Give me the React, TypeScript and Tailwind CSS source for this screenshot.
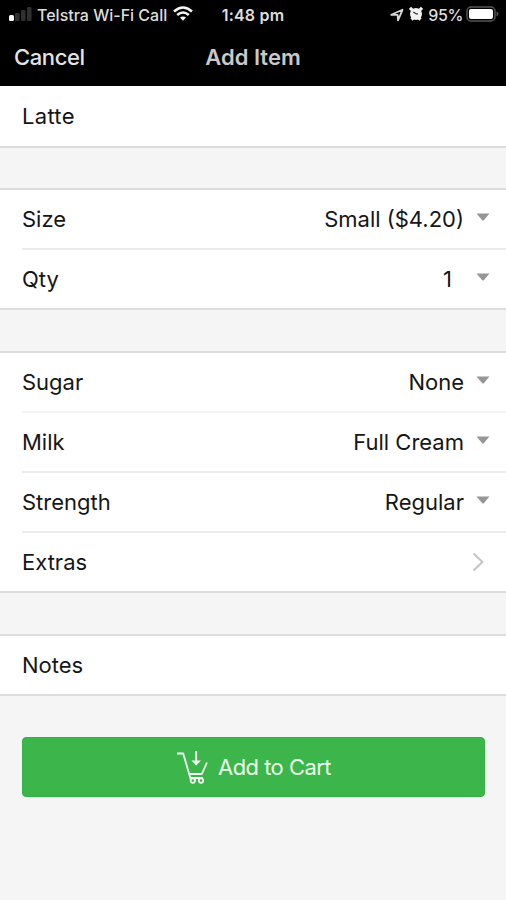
import React from 'react';

interface RowProps {
  label: string;
  value?: string;
  valueClass?: string;
  className?: string;
  kind?: 'select' | 'link' | 'plain';
}

const CaretDown = () => (
  <svg width="14" height="8" viewBox="0 0 14 8" className="shrink-0">
    <path d="M0.5 0.5h13L7.8 7.2q-.8.7-1.6 0z" fill="#969696" />
  </svg>
);

const ChevronRight = () => (
  <svg width="12" height="20" viewBox="0 0 12 20" fill="none" stroke="#c4c4c4" strokeWidth="2">
    <path d="M1.5 1.5L10.5 10l-9 8.5" />
  </svg>
);

const Row: React.FC<RowProps> = ({ label, value, valueClass = '', className = 'h-[58px]', kind = 'plain' }) => (
  <div className={`ml-[22px] flex items-center justify-between ${className}`}>
    <span>{label}</span>
    {kind === 'select' && (
      <div className="flex items-center pr-4">
        <span className={`mr-3 ${valueClass}`}>{value}</span>
        <span className="-mt-1">
          <CaretDown />
        </span>
      </div>
    )}
    {kind === 'link' && (
      <div className="pr-[22px]">
        <ChevronRight />
      </div>
    )}
  </div>
);

const Section: React.FC<{ className?: string; children: React.ReactNode }> = ({ className = '', children }) => (
  <section className={`border-[#dcdcdc] bg-white ${className}`}>{children}</section>
);

const StatusBar = () => (
  <div className="grid h-[29px] grid-cols-[1fr_auto_1fr] items-center text-[16px] font-medium text-[#dedede]">
    <div className="flex items-center pl-[9px]">
      <svg width="24" height="16" viewBox="0 0 24 16" fill="#303030" className="-mt-0.5">
        <rect x="0" y="9" width="5" height="6" rx="1.5" fill="#fff" />
        <rect x="6" y="7" width="4.5" height="8" rx="1.2" />
        <rect x="12" y="4" width="4.5" height="11" rx="1.2" />
        <rect x="18" y="1" width="4.5" height="14" rx="1.2" />
      </svg>
      <span className="ml-1 whitespace-nowrap">Telstra Wi-Fi Call</span>
      <svg width="20" height="16" viewBox="0 0 20 16" fill="none" stroke="#f4f4f4" className="-mt-0.5 ml-1.5 shrink-0">
        <path d="M1 5.5q9-8 18 0" strokeWidth="2.6" />
        <path d="M4.2 9q5.8-5 11.6 0" strokeWidth="2.5" />
        <path d="M7 11.5q3-2.2 6 0l-3 3.2z" fill="#f4f4f4" stroke="none" />
      </svg>
    </div>
    <span className="font-semibold tracking-[0.2px]">1:48 pm</span>
    <div className="flex items-center justify-end pr-[7px]">
      <svg width="14" height="14" viewBox="0 0 14 14" fill="none" stroke="#d8d8d8" strokeWidth="1.8" strokeLinejoin="round">
        <path d="M1.2 6.8L12.5 1.8 8 12.4 7.6 6.8z" />
      </svg>
      <svg width="14" height="15" viewBox="0 0 14 15" className="-mt-0.5 ml-[5px]">
        <path d="M1 4L3.2 1.8M13 4L10.8 1.8M2.5 13.5L4 12M11.5 13.5L10 12" stroke="#f2f2f2" strokeWidth="3.2" />
        <circle cx="7" cy="8" r="6" fill="#f2f2f2" />
        <path d="M7 7.8L4.3 6M7 7.8h2" stroke="#333" strokeWidth="1.2" fill="none" />
      </svg>
      <span className="ml-[5px] tracking-[-0.4px]">95%</span>
      <svg width="33" height="16" viewBox="0 0 33 16" className="-mt-0.5 ml-[3px]">
        <rect x="1" y="1" width="28" height="14" rx="4" fill="none" stroke="#555" strokeWidth="1.5" />
        <rect x="3" y="3" width="24" height="10" rx="2" fill="#fff" />
        <path d="M30.5 5.5q2 .8 2 2.5t-2 2.5z" fill="#555" />
      </svg>
    </div>
  </div>
);

const CartIcon = () => (
  <svg width="33" height="35" viewBox="0 0 33 35" fill="none" stroke="#f2fff2" strokeWidth="1.8">
    <path d="M1 3.5h6.2l6 20.5h12.6l5.2-11.5" strokeLinejoin="round" />
    <path d="M20.2 1v11" />
    <path d="M15.5 10.5h9.4l-4.7 5z" fill="#f2fff2" stroke="none" />
    <path d="M13.2 24l1.2 4h12.4" />
    <circle cx="16.8" cy="30.6" r="2.2" />
    <circle cx="25" cy="30.6" r="2.2" />
  </svg>
);

export default function App() {
  return (
    <div className="min-h-[900px] w-full bg-[#f5f5f5] font-['Inter',sans-serif] text-[22px] text-[#161616]">
      {/* Header */}
      <header className="h-[86px] bg-black">
        <StatusBar />
        <nav className="grid h-[57px] grid-cols-3 items-center font-medium">
          <span className="pl-[14px] tracking-[-0.4px] text-[#e4e4e4]">Cancel</span>
          <span className="text-center font-semibold text-[#c9c9c9]">Add Item</span>
        </nav>
      </header>

      {/* Order options */}
      <main className="flex flex-col gap-[41px]">
        <Section className="-mb-px border-b-2">
          <Row label="Latte" className="h-[60px] tracking-[0.3px]" />
        </Section>
        <Section className="border-y-2">
          <Row label="Size" value="Small ($4.20)" kind="select" className="h-[60px] border-b-2 border-[#ebebeb]" />
          <Row label="Qty" value="1" valueClass="pr-[12px]" kind="select" />
        </Section>
        <Section className="border-y-2">
          <Row label="Sugar" value="None" kind="select" className="h-[60px] border-b-2 border-[#f4f4f4]" />
          <Row label="Milk" value="Full Cream" kind="select" className="h-[60px] border-b-2 border-[#ebebeb]" />
          <Row label="Strength" value="Regular" kind="select" className="h-[60px] border-b-2 border-[#ebebeb]" />
          <Row label="Extras" kind="link" />
        </Section>
        <Section className="border-y-2">
          <Row label="Notes" />
        </Section>
      </main>

      {/* Submit */}
      <button className="mx-[22px] mt-[41px] flex h-[60px] w-[463px] items-center justify-center rounded border border-[#2fb344] bg-[#3cb64a] text-[#e9ffe9]">
        <CartIcon />
        <span className="ml-[9px] tracking-[-0.55px]">Add to Cart</span>
      </button>
    </div>
  );
}
